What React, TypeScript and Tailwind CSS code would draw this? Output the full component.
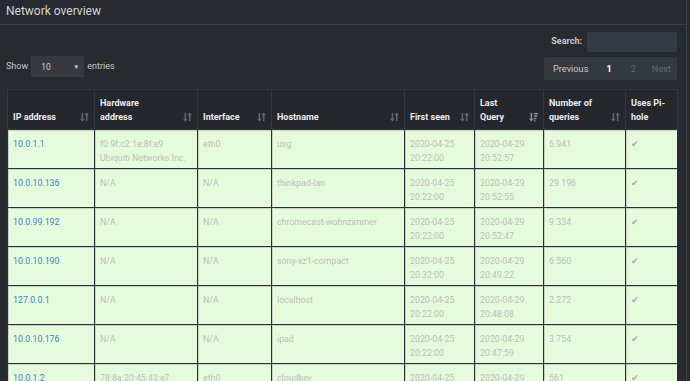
import React from "react";

const rows = [
  { ip: "10.0.1.1", hw: ["f0:9f:c2:1e:8f:e9", "Ubiquiti Networks Inc."], iface: "eth0", host: "usg", first: ["2020-04-25", "20:22:00"], last: ["2020-04-29", "20:52:57"], n: "6.941" },
  { ip: "10.0.10.136", hw: ["N/A"], iface: "N/A", host: "thinkpad-lan", first: ["2020-04-25", "20:22:00"], last: ["2020-04-29", "20:52:55"], n: "29.196" },
  { ip: "10.0.99.192", hw: ["N/A"], iface: "N/A", host: "chromecast-wohnzimmer", first: ["2020-04-25", "20:22:00"], last: ["2020-04-29", "20:52:47"], n: "9.334" },
  { ip: "10.0.10.190", hw: ["N/A"], iface: "N/A", host: "sony-xz1-compact", first: ["2020-04-25", "20:32:00"], last: ["2020-04-29", "20:49:22"], n: "6.560" },
  { ip: "127.0.0.1", hw: ["N/A"], iface: "N/A", host: "localhost", first: ["2020-04-25", "20:22:00"], last: ["2020-04-29", "20:48:08"], n: "2.272" },
  { ip: "10.0.10.176", hw: ["N/A"], iface: "N/A", host: "ipad", first: ["2020-04-25", "20:22:00"], last: ["2020-04-29", "20:47:59"], n: "3.754" },
  { ip: "10.0.1.2", hw: ["78:8a:20:45:43:e7"], iface: "eth0", host: "cloudkey", first: ["2020-04-25", "20:22:00"], last: ["2020-04-29", "20:40:11"], n: "561" },
];

function SortBoth() {
  return (
    <svg width="9" height="10" viewBox="0 0 11 12" className="shrink-0">
      <g fill="#62676d">
        <rect x="2" y="1" width="1.8" height="8" />
        <path d="M0 8 L2.9 11.5 L5.8 8 Z" />
        <rect x="7.3" y="3" width="1.8" height="8" />
        <path d="M5.3 4 L8.2 0.5 L11 4 Z" />
      </g>
    </svg>
  );
}

function SortDesc() {
  return (
    <svg width="9" height="10" viewBox="0 0 11 12" className="shrink-0">
      <g fill="#8e9398">
        <rect x="2" y="1" width="1.8" height="8" />
        <path d="M0 8 L2.9 11.5 L5.8 8 Z" />
        <rect x="6.2" y="1" width="4.8" height="1.8" />
        <rect x="6.2" y="4" width="3.8" height="1.8" />
        <rect x="6.2" y="7" width="2.8" height="1.8" />
        <rect x="6.2" y="10" width="1.8" height="1.6" />
      </g>
    </svg>
  );
}

const headers: { label: React.ReactNode; w: string; sort: "both" | "desc" | "none" }[] = [
  { label: "IP address", w: "w-[87px]", sort: "both" },
  { label: <>Hardware<br />address</>, w: "w-[103px]", sort: "both" },
  { label: "Interface", w: "w-[74px]", sort: "both" },
  { label: "Hostname", w: "w-[133px]", sort: "both" },
  { label: "First seen", w: "w-[70px]", sort: "both" },
  { label: <>Last<br />Query</>, w: "w-[69px]", sort: "desc" },
  { label: <>Number of<br />queries</>, w: "w-[82px]", sort: "both" },
  { label: <>Uses Pi-<br />hole</>, w: "w-[52px]", sort: "none" },
];

const td = "border border-[#2c3034] shadow-[inset_1px_1px_0_#c9cfc4] px-[5px] pt-[8px] pb-[3px] align-top whitespace-nowrap overflow-hidden";

export default function App() {
  return (
    <div className="w-[690px] h-[381px] overflow-hidden bg-[#272b30] font-['Roboto',sans-serif] text-[#c8c8c8]">
      <div className="w-[687px] h-full border-r border-[#3b4046] overflow-hidden">
        <div className="h-[25px] border-b border-[#383d43] px-[6px] pt-[2px] text-[12px] leading-[18px] text-[#d2d4d6] whitespace-nowrap">
          Network overview
        </div>
        <div className="flex justify-end pr-[9px] pt-[7px]">
          <div className="flex items-center gap-[5px]">
            <span className="text-[9px] font-bold text-[#c4c7ca]">Search:</span>
            <div className="w-[90px] h-[20px] rounded-[2px] bg-[#353b42]" />
          </div>
        </div>
        <div className="flex items-start justify-between pl-[6px] pr-[9px] mt-[5px]">
          <div className="flex items-center gap-[3px] text-[9px] text-[#c4c7ca] mt-[-1px]">
            <span>Show</span>
            <div className="w-[53px] h-[21px] bg-[#353a41] flex items-center justify-between pl-[10px] pr-[5px]">
              <span className="text-[8.5px] text-[#d0d0d0] mt-[2px]">10</span>
              <span className="text-[6px] text-[#d0d0d0]">▼</span>
            </div>
            <span>entries</span>
          </div>
          <div className="w-[133px] h-[23px] rounded-[2px] bg-[#343940] flex items-center text-[9.2px] pl-[9px] whitespace-nowrap">
            <span className="text-[#c4c7ca]">Previous</span>
            <span className="ml-[18px] font-bold text-white">1</span>
            <span className="ml-[19px] text-[#63686e]">2</span>
            <span className="ml-[16px] text-[#63686e]">Next</span>
          </div>
        </div>
        <div className="pl-[7px] mt-[9px]">
          <table className="border-collapse table-fixed w-[670px]">
            <colgroup>
              {headers.map((h, i) => (
                <col key={i} className={h.w} />
              ))}
            </colgroup>
            <thead>
              <tr className="bg-[#24282c]">
                {headers.map((h, i) => (
                  <th key={i} className="border border-[#34383d] h-[40px] px-[5px] pb-[5px] align-bottom text-left">
                    <div className="flex items-end justify-between text-[9px] leading-[14px] font-bold text-[#e8eaec] whitespace-nowrap">
                      <span>{h.label}</span>
                      {h.sort === "both" && <span className="mb-[2px]"><SortBoth /></span>}
                      {h.sort === "desc" && <span className="mb-[2px]"><SortDesc /></span>}
                    </div>
                  </th>
                ))}
              </tr>
            </thead>
            <tbody className="text-[8.8px] leading-[13.5px] text-[#bcbfb9]">
              {rows.map((r, i) => (
                <tr key={i} className="bg-[#e4fcdc] h-[39px]">
                  <td className={td}><span className="text-[#3a86c0]">{r.ip}</span></td>
                  <td className={td}>{r.hw.map((l, j) => <div key={j}>{l}</div>)}</td>
                  <td className={td}>{r.iface}</td>
                  <td className={td}>{r.host}</td>
                  <td className={td}>{r.first.map((l, j) => <div key={j}>{l}</div>)}</td>
                  <td className={td}>{r.last.map((l, j) => <div key={j}>{l}</div>)}</td>
                  <td className={td}>{r.n}</td>
                  <td className={td}><span className="text-[9px] text-[#aab0a8]">✔</span></td>
                </tr>
              ))}
            </tbody>
          </table>
        </div>
      </div>
    </div>
  );
}
